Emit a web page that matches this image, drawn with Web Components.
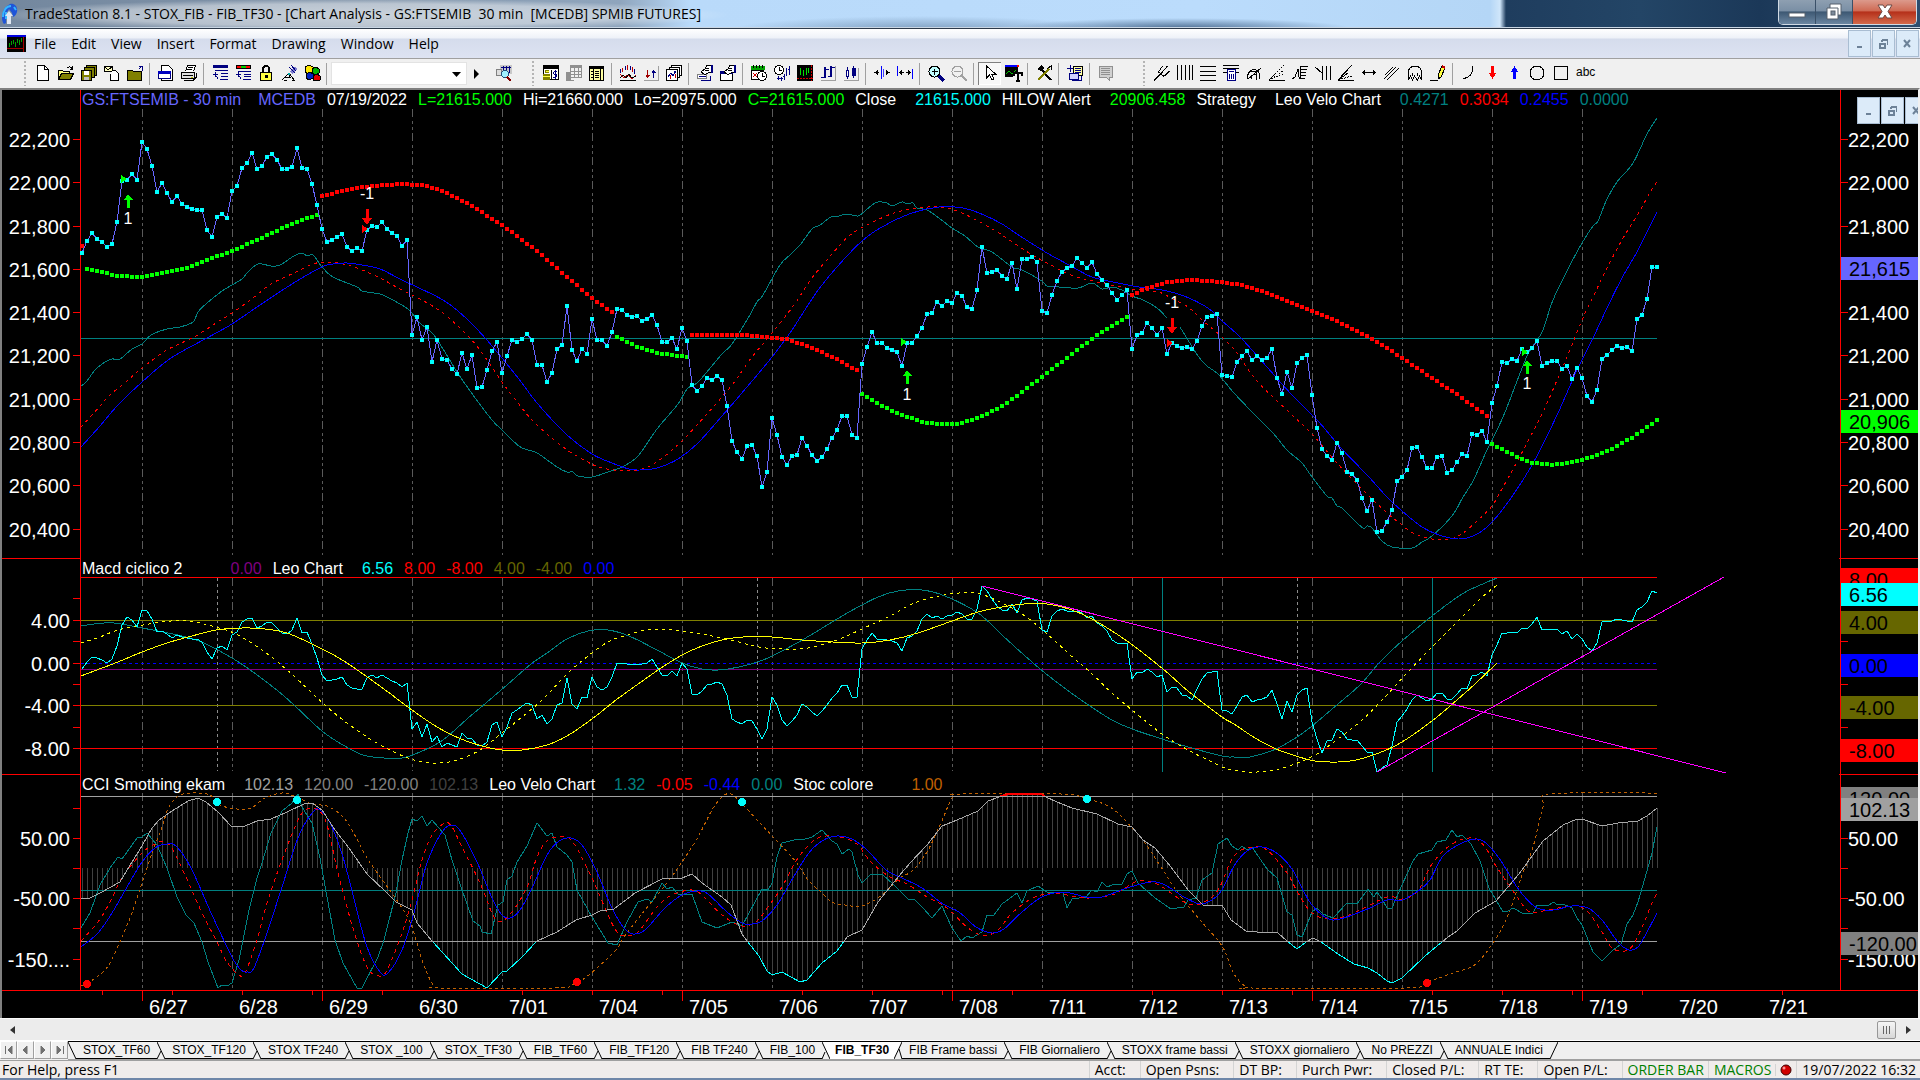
<!DOCTYPE html>
<html lang="en">
<head>
<meta charset="utf-8">
<title>TradeStation 8.1 - STOX_FIB - FIB_TF30</title>
<style>
  html, body { margin: 0; height: 100%; background: #f0f0f0; overflow: hidden; }
  body { font-family: "Open Sans", "Noto Sans", sans-serif; font-size: 14px; color: #000; }
</style>
</head>
<body>
<trade-station></trade-station>

<script>
// ---------- helpers ----------

// Every component shares this: attach an open root and fill it.
class BaseElement extends HTMLElement {
  connectedCallback() {
    this.attachShadow({ mode: 'open' }).innerHTML = `
      <style>
        *, *::before, *::after { box-sizing: border-box; }
        button { font: inherit; color: inherit; border: 0; padding: 0; background: none; }
        ${this.styles()}
      </style>
      ${this.markup()}`
  }
  styles() { return '' }
  markup() { return '' }
}

const BAR0 = 82      // x of the first bar
const STEP = 5       // bar spacing
const LAST = 315     // index of the last bar
const barX = (i) => BAR0 + i * STEP
const pairs = (text) => text.trim().split(/\s+/).map((p) => p.split(',').map(Number))
const list = (text) => text.trim().split(/\s+/).map(Number)

// linear interpolation along a list of [x, y] points
function valueAt(points, x) {
  for (let i = 1; i < points.length; i++) {
    const [x0, y0] = points[i - 1]
    const [x1, y1] = points[i]
    if (x <= x1) return y0 + (y1 - y0) * (x - x0) / (x1 - x0)
  }
  return points[points.length - 1][1]
}

// Smooth path through the points (Catmull-Rom as cubic beziers)
function smooth(points) {
  let d = `M${points[0]}`
  for (let i = 0; i < points.length - 1; i++) {
    const p0 = points[i - 1] || points[i]
    const p1 = points[i]
    const p2 = points[i + 1]
    const p3 = points[i + 2] || p2
    const c1 = [p1[0] + (p2[0] - p0[0]) / 6, p1[1] + (p2[1] - p0[1]) / 6]
    const c2 = [p2[0] - (p3[0] - p1[0]) / 6, p2[1] - (p3[1] - p1[1]) / 6]
    d += `C${c1.map((n) => n.toFixed(1))} ${c2.map((n) => n.toFixed(1))} ${p2}`
  }
  return d
}

const curve = (text, color, extra = '') =>
  `<path d="${smooth(pairs(text))}" stroke="${color}" ${extra}/>`
const zigzag = (points, color, extra = '') =>
  `<polyline points="${points.join(' ')}" stroke="${color}" ${extra}/>`
const hline = (y, color, extra = '') =>
  `<path d="M81 ${y}.5H${barX(LAST)}" stroke="${color}" ${extra}/>`
const square = (x, y, color) =>
  `<rect x="${x - 2}" y="${Math.round(y) - 2}" width="4" height="4" fill="${color}" stroke="none"/>`

function dotted(text, color) {
  const points = pairs(text)
  let out = ''
  for (let x = points[0][0]; x <= points[points.length - 1][0] + 1; x += STEP) {
    out += square(x, valueAt(points, x), color)
  }
  return out
}

// dash-dot session breaks, one every 18 bars
function sessions(top, bottom) {
  let out = ''
  for (let x = 142; x <= 1582; x += 90) {
    out += `<path d="M${x}.5 ${top}V${bottom}" stroke="#5a5a5a" stroke-dasharray="8 4 3 3 3 3"/>`
  }
  return out
}

// ---------- price panel ----------

// closes, in thirds of a pixel below y = 100
const CLOSES = list(`
460 423 398 416 426 441 432 366 242 240 221 240 126 147 198 276 249 279 306 288 312 321 327 330
330 390 411 351 342 354 272 258 203 189 159 207 198 171 162 180 207 207 201 144 204 207 252 315
387 426 420 411 402 441 453 444 453 390 378 381 366 387 399 408 438 420 705 651 720 681 786 721
777 780 807 822 759 807 765 864 861 810 753 726 819 768 720 726 717 702 720 795 795 846 819 747
735 618 750 783 747 762 657 720 720 738 696 627 630 645 651 648 663 657 645 675 726 726 714 746
684 722 855 873 857 833 839 828 840 918 1023 1056 1077 1038 1035 1068 1161 1116 954 1005 1071 1095 1068 1065
1014 1038 1065 1083 1071 1047 1014 990 948 948 1005 1014 792 741 696 729 729 744 750 756 798 729 729 708
684 642 639 606 618 603 609 579 588 621 627 570 441 519 516 510 528 537 489 567 477 477 471 486
633 639 585 543 516 504 498 474 489 504 486 522 540 555 579 600 585 570 747 705 699 669 684 705
684 762 729 738 744 741 747 723 678 651 648 642 825 828 831 786 768 753 780 768 780 774 747 833
882 816 864 789 774 765 884 984 1047 1068 1080 1029 1059 1116 1122 1140 1194 1233 1200 1296 1293 1266 1230 1143
1131 1110 1044 1041 1071 1104 1104 1071 1068 1119 1110 1086 1062 1068 1002 1005 993 1026 909 858 786 789 777 783
746 756 744 722 798 789 783 783 807 798 837 804 834 888 906 870 777 765 750 738 744 741 753 657
645 597 501 501`)

const arrowUp = (x, y) =>
  `<path d="M${x} ${y}l-4 6h3v8h3v-8h3z" fill="#00ff00" stroke="none"/>`
const arrowDown = (x, y) =>
  `<path d="M${x - 1} ${y}h3v9h3l-5 7l-5 -7h4z" fill="#ff0000" stroke="none"/>`
const entry = (x, y, color) =>
  `<path d="M${x - 2} ${y - 4}l6 4l-6 4z" fill="${color}" stroke="none"/>`
const tradeText = (x, y, text) =>
  `<text x="${x}" y="${y}" text-anchor="middle">${text}</text>`

function pricePlot() {
  const price = CLOSES.map((v, i) => [barX(i), Math.round(100 + v / 3)])
  return `
    ${sessions(109, 555)}
    ${hline(338, '#008080')}
    ${curve(`81,386 87,381 95,370 105,362 112,359 120,359 132,349 142,344 151,335 167,329 180,327 193,322
      198,312 207,303 222,291 232,285 242,279 247,273 258,264 271,266 280,265 294,256 302,253 307,256
      313,255 322,267 333,277 357,287 362,291 380,294 387,297 408,309 420,323 433,334 443,349 457,372
      473,395 492,420 502,430 512,440 522,448 537,453 557,467 567,472 573,472 578,476 592,477 608,472
      622,467 638,456 657,429 678,404 687,389 697,383 706,373 722,354 732,344 747,320 757,302 763,295
      780,265 790,255 800,245 812,229 820,225 831,217 839,216 847,214 858,216 865,211 872,205 878,202
      887,203 892,206 902,202 907,204 913,203 917,208 929,211 952,228 965,236 978,247 992,252 1012,267
      1022,270 1042,281 1047,286 1059,287 1078,288 1092,283 1102,289 1112,287 1122,290 1132,296 1143,300
      1157,308 1167,318`, '#008080')}
    ${curve(`1180,327 1188,340 1198,356 1207,366 1218,374 1234,393 1257,417 1273,433 1287,450 1302,463
      1312,477 1327,496 1332,498 1337,506 1342,508 1352,518 1363,528 1367,526 1372,528 1382,541 1392,547
      1412,548 1422,542 1432,536 1452,516 1463,497 1473,481 1487,450 1503,417 1519,376 1528,354 1537,340
      1543,330 1553,300 1567,271 1582,243 1593,226 1598,221 1607,199 1617,182 1633,163 1647,134
      1657,118`, '#008080')}
    ${curve(`81,427 100,406 110,395 127,381 142,368 167,350 194,337 216,323 232,313 253,298 271,284 294,273
      313,264 327,262 343,264 357,268 380,278 400,289 420,299 443,313 465,333 480,350 502,382 518,403
      535,423 563,447 584,460 602,468 629,471 645,468 661,459 682,441 706,415 732,385 752,357 772,333
      794,305 812,278 833,253 849,236 869,224 894,213 918,208 939,207 957,211 978,221 1002,235 1029,253
      1049,264 1071,275 1097,282 1132,289 1158,292 1171,298 1188,307 1202,320 1222,337 1237,353 1257,381
      1292,415 1312,434 1337,463 1363,490 1387,513 1402,525 1413,533 1432,539 1450,539 1463,533 1477,521
      1492,506 1503,487 1517,462 1527,443 1543,412 1558,378 1570,350 1582,320 1593,297 1606,270 1622,240
      1638,214 1652,189 1657,182`, '#ff0000', 'stroke-dasharray="3 4"')}
    ${curve(`81,447 100,426 118,405 142,382 171,358 207,338 232,324 257,307 292,284 322,267 333,264 347,263
      362,265 380,269 402,280 443,300 467,319 486,339 502,358 522,383 537,403 567,435 592,454 612,463
      629,469 640,470 657,468 678,459 698,443 722,416 747,387 772,357 792,330 816,293 837,267 862,241
      882,227 912,213 939,207 963,208 984,215 1002,224 1020,236 1047,253 1071,266 1092,277 1118,283
      1139,287 1162,290 1184,296 1208,308 1221,320 1241,338 1267,367 1292,395 1318,421 1342,449 1368,476
      1387,497 1402,511 1422,527 1439,535 1458,539 1473,536 1487,527 1503,509 1521,483 1537,456 1558,413
      1577,370 1593,338 1607,308 1622,278 1638,250 1657,212`, '#0000ff')}
    ${square(82, 246, '#ff0000')}
    ${dotted('87,269 102,272 117,276 142,277 163,273 184,269 207,260 232,251 257,240 287,226 307,218 318,215', '#00ff00')}
    ${dotted('322,196 343,191 362,187 384,185 402,184 422,185 443,191 467,203 502,225 537,251 567,277 592,298 612,312', '#ff0000')}
    ${dotted('617,337 638,347 657,353 678,356 687,357', '#00ff00')}
    ${dotted('692,335 743,335 767,337 787,339 812,348 837,359 858,371', '#ff0000')}
    ${dotted('862,394 877,403 897,413 922,422 937,424 957,424 978,418 1002,406 1022,392 1047,373 1072,354 1097,335 1127,317', '#00ff00')}
    ${dotted(`1132,295 1147,288 1167,282 1188,280 1212,281 1242,285 1267,293 1287,301 1312,311 1337,321 1357,331
      1372,339 1387,348 1402,358 1432,378 1458,395 1487,416`, '#ff0000')}
    ${dotted('1492,444 1513,455 1532,463 1553,465 1572,462 1593,457 1612,449 1633,437 1647,427 1657,420', '#00ff00')}
    ${zigzag(price, '#6666ff')}
    ${price.map(([x, y]) => square(x, y, '#00ffff')).join('')}
    ${entry(123, 179, '#00ff00')}${arrowUp(128, 194)}${tradeText(128, 224, '1')}
    ${entry(364, 229, '#ff0000')}${arrowDown(367, 209)}${tradeText(367, 199, '-1')}
    ${entry(903, 342, '#00ff00')}${arrowUp(907, 370)}${tradeText(907, 400, '1')}
    ${entry(1169, 343, '#ff0000')}${arrowDown(1172, 318)}${tradeText(1172, 308, '-1')}
    ${entry(1524, 352, '#00ff00')}${arrowUp(1527, 360)}${tradeText(1527, 389, '1')}`
}

// ---------- macd panel ----------

// oscillator, in thirds of a pixel below y = 550
const MACD = list(`
356 336 320 325 330 340 328 289 226 200 210 230 180 184 208 247 242 252 264 254 262 265 266 267
276 306 328 293 289 300 255 246 216 208 205 234 228 217 220 234 248 252 240 203 248 247 282 325
375 394 391 386 382 405 414 416 418 385 376 385 374 383 392 400 410 400 538 516 562 523 577 557
591 580 585 590 550 564 568 586 588 576 525 516 560 532 490 481 468 460 466 508 496 521 508 466
458 384 463 478 442 445 382 410 420 410 382 340 338 342 341 343 341 338 328 350 376 379 362 379
340 358 432 436 422 405 403 395 402 436 506 516 523 509 513 538 568 538 440 466 510 528 512 494
461 472 485 497 484 466 445 428 404 404 441 441 297 270 250 268 268 270 274 280 303 264 259 243
208 192 205 198 208 197 196 187 192 207 208 177 108 122 148 168 180 183 162 189 149 145 147 152
240 245 198 184 178 183 185 182 190 203 198 218 229 243 270 279 279 279 386 367 368 357 366 380
376 427 411 414 435 437 450 418 388 370 366 363 481 483 492 467 440 436 457 450 448 442 421 462
507 454 487 434 421 414 517 566 609 572 570 538 546 568 570 571 588 607 607 666 655 645 588 517
499 477 449 436 444 454 448 430 428 447 447 432 413 418 378 375 365 377 316 284 250 250 247 250
235 238 221 201 241 238 238 237 253 244 268 252 266 292 304 279 217 213 212 206 211 213 215 181
172 156 124 128`)

function macdPlot() {
  const line = MACD.map((v, i) => [barX(i), Math.round(550 + v / 3)])
  const cycleMarks = [217, 757, 1297]
    .map((x) => `<path d="M${x}.5 578V771" stroke="#8c8c8c" stroke-dasharray="3 3"/>`).join('')
  return `
    ${sessions(578, 771)}
    ${cycleMarks}
    ${hline(577, '#ff0000')}
    ${hline(620, '#808000')}
    ${hline(663, '#0000ff', 'stroke-dasharray="3 3"')}
    ${hline(669, '#800080')}
    ${hline(705, '#808000')}
    ${hline(748, '#ff0000')}
    <path d="M1162.5 578V772M1432.5 578V772" stroke="#008080"/>
    ${curve(`81,626 94,624 114,623 142,628 163,632 186,637 204,643 232,658 253,672 278,691 294,705 322,731
      343,745 363,755 384,758 402,758 420,752 443,740 467,719 486,703 507,685 531,664 547,653 567,639
      588,631 608,630 629,636 657,650 682,663 702,669 718,670 739,667 763,660 784,650 804,639 829,624
      849,612 878,597 898,591 922,590 945,596 978,613 1002,635 1024,655 1045,673 1067,690 1090,706
      1112,720 1132,729 1162,739 1188,747 1222,756 1234,757 1250,757 1276,749 1297,737 1312,726 1338,704
      1361,684 1379,663 1402,641 1432,616 1462,594 1485,583 1497,578`, '#008080')}
    ${curve(`81,643 100,637 118,630 143,625 171,621 188,621 204,624 229,631 245,639 265,652 286,669 310,691
      327,707 347,723 367,737 388,749 408,758 424,762 439,763 457,760 480,750 502,733 527,713 543,699
      567,674 588,656 608,642 624,636 641,631 661,629 682,631 702,634 731,640 759,647 784,649 808,648
      837,640 862,629 890,616 914,603 939,596 959,593 980,594 1002,603 1022,614 1045,632 1069,654
      1090,672 1112,693 1132,710 1162,734 1188,750 1208,760 1222,767 1233,770 1246,772 1269,771 1292,765
      1315,755 1338,739 1361,721 1384,698 1407,673 1432,647 1457,622 1480,599 1497,585`, '#ffff00', 'stroke-dasharray="3 4"')}
    ${zigzag(line, '#00ffff')}
    ${curve(`81,676 102,668 118,662 142,652 167,643 192,636 216,630 242,628 265,629 287,633 312,644 339,658
      363,674 388,692 412,710 437,727 461,739 486,747 502,750 522,750 547,745 567,736 592,719 616,700
      641,682 661,668 682,655 702,646 722,640 743,637 772,637 802,640 833,642 862,643 890,640 918,633
      952,621 978,612 1002,607 1024,604 1047,604 1069,609 1092,619 1127,641 1163,669 1188,691 1222,717
      1234,724 1255,738 1276,749 1296,756 1315,761 1338,762 1356,760 1379,753 1402,742 1432,721 1457,700
      1475,684 1497,663`, '#ffff00')}
    <path d="M982 586L1726 773M1377 772L1724 577" stroke="#ff00ff"/>`
}

// ---------- cci panel ----------

const CCI = pairs(`
81,898 90,898 102,892 120,882 127,870 142,846 152,828 159,820 172,811 188,801 198,798 206,802 218,812
232,827 245,826 257,821 271,819 287,812 306,803 312,803 322,810 335,830 349,848 367,874 386,892 396,902
412,910 417,923 432,941 443,953 462,974 487,988 502,972 507,971 522,957 537,941 557,932 576,920 592,915
600,911 614,909 635,893 662,879 682,878 692,874 702,883 722,897 731,905 742,934 747,941 759,956 767,971
772,975 782,972 800,982 807,980 822,963 837,951 847,937 862,930 878,902 894,882 910,863 927,845 942,826
957,820 978,811 988,801 1002,796 1008,794 1041,794 1046,797 1057,802 1072,808 1097,814 1118,824 1132,827
1143,840 1155,848 1171,867 1188,890 1204,906 1222,905 1231,920 1246,931 1257,932 1278,933 1287,941
1297,949 1306,942 1313,938 1321,942 1338,954 1354,964 1368,968 1377,973 1387,981 1392,983 1402,978
1425,956 1448,937 1457,931 1475,913 1496,901 1519,874 1543,841 1563,825 1577,819 1582,819 1602,826
1618,823 1638,821 1647,816 1657,808`)

const signal = (x, y, color) => `<ellipse cx="${x}" cy="${y}" rx="4" ry="4" fill="${color}" stroke="none"/>`

function cciPlot() {
  let histogram = ''
  for (let i = 0; i <= LAST; i++) {
    histogram += `M${barX(i)}.5 868V${Math.round(valueAt(CCI, barX(i)))}`
  }
  return `
    <clipPath id="low"><rect x="81" y="942" width="1600" height="50"/></clipPath>
    <clipPath id="high"><rect x="81" y="780" width="1600" height="16"/></clipPath>
    ${sessions(793, 988)}
    <path d="${histogram}" stroke="#404040"/>
    ${hline(796, '#a0a0a0')}
    ${hline(890, '#008080')}
    ${hline(941, '#a0a0a0')}
    ${curve(`81,986 94,979 108,966 122,937 133,910 142,883 152,853 162,827 169,807 180,795 196,793 210,795
      220,805 237,809 251,808 265,798 282,793 294,796 312,804 327,806 341,815 351,828 367,858 386,885
      402,908 412,927 422,960 432,983 441,988 555,988 571,985 582,980 596,969 616,950 624,937 645,910
      667,883 682,862 698,837 712,810 722,797 731,794 743,805 759,822 776,840 796,862 808,880 822,893
      832,902 845,905 862,906 882,895 900,878 912,871 927,852 941,823 952,798 961,794 1061,794 1087,799
      1104,804 1118,813 1132,828 1143,840 1161,867 1178,893 1200,920 1222,946 1234,974 1246,987 1252,988
      1407,988 1430,981 1453,973 1473,966 1485,954 1501,930 1512,905 1521,878 1533,847 1543,807 1551,794
      1657,793`, '#c06000', 'stroke-dasharray="3 3"')}
    ${zigzag(pairs(`81,928 90,913 100,885 110,868 118,857 122,859 137,838 142,837 147,833 157,845 167,868
      177,897 186,915 194,923 202,942 208,962 218,988 222,985 227,986 232,983 239,960 249,910 257,878
      262,863 271,833 282,811 292,803 298,794 302,807 312,823 320,858 327,897 335,940 343,963 357,988
      362,988 378,957 384,940 396,893 402,860 408,833 412,819 417,821 422,816 427,826 432,820 445,835
      452,860 461,887 473,921 480,926 482,932 491,934 498,905 503,902 507,880 512,876 517,862 527,846
      537,823 547,836 552,833 557,847 567,855 572,862 577,890 592,917 608,943 617,945 627,922 638,902
      647,899 652,902 662,883 667,889 672,887 678,894 692,894 702,922 717,928 732,922 742,926 762,889
      768,890 772,883 777,857 782,843 798,839 802,840 812,837 822,830 832,841 837,844 842,854 849,849
      852,852 858,875 862,883 871,874 882,874 894,885 908,899 914,899 922,907 932,918 942,906 952,928
      961,941 967,936 972,938 982,932 987,915 994,915 1002,904 1017,893 1022,903 1027,891 1038,886
      1047,892 1063,893 1067,908 1072,899 1086,897 1092,890 1097,892 1102,882 1107,887 1112,885 1122,884
      1127,874 1132,871 1138,883 1155,898 1171,909 1184,907 1188,900 1196,898 1202,880 1212,873 1218,844
      1227,838 1232,846 1238,850 1242,846 1247,850 1252,847 1267,869 1277,878 1287,912 1292,915 1297,935
      1302,937 1312,912 1317,908 1323,914 1333,918 1347,903 1357,904 1368,889 1374,897 1377,892 1382,899
      1387,908 1392,908 1402,885 1413,861 1418,854 1432,850 1437,842 1446,840 1452,830 1457,837 1462,835
      1471,844 1480,861 1489,888 1503,912 1508,911 1513,908 1524,914 1533,913 1537,905 1548,906 1553,902
      1558,905 1563,904 1572,908 1577,918 1582,925 1593,952 1602,961 1612,951 1621,944 1627,924 1633,915
      1638,902 1643,885 1652,853 1657,827`), '#008080')}
    ${curve(`81,941 98,922 110,902 122,878 142,853 157,843 163,842 171,847 186,877 202,913 216,940 227,962
      239,975 245,973 257,940 267,903 282,860 298,820 307,809 318,810 327,825 339,877 355,935 367,967
      376,975 386,972 402,933 412,900 422,860 432,835 445,823 452,827 462,847 480,883 492,913 500,922
      512,912 527,887 537,857 547,841 559,837 572,841 592,878 608,915 617,932 624,936 638,932 657,907
      672,895 692,890 704,897 722,915 742,926 757,921 768,907 782,887 798,858 816,839 832,836 847,839
      858,845 871,862 890,877 907,884 927,897 947,908 967,927 982,935 997,931 1012,913 1033,898 1053,893
      1072,896 1090,898 1112,895 1122,890 1138,881 1155,883 1171,893 1188,904 1202,903 1218,890 1234,856
      1252,847 1267,850 1287,873 1297,891 1312,913 1333,919 1356,912 1387,897 1402,899 1418,891 1432,864
      1452,844 1473,838 1485,847 1496,866 1513,891 1527,910 1537,912 1558,908 1577,906 1588,912 1602,932
      1612,948 1625,951 1633,945 1643,925 1652,903 1657,893`, '#ff0000', 'stroke-dasharray="4 4"')}
    ${curve(`81,947 98,933 112,913 127,887 142,862 155,848 167,844 177,847 192,870 212,915 232,957 241,970
      247,972 254,968 267,933 282,887 298,838 312,813 320,810 331,825 343,857 355,903 367,947 380,972
      388,973 402,950 414,913 427,863 442,832 452,825 461,832 477,862 492,898 502,915 510,918 520,910
      532,888 547,855 559,841 571,838 582,845 596,870 612,908 624,928 633,934 645,930 665,908 682,895
      697,891 708,894 727,912 742,923 752,924 762,921 777,905 790,883 808,854 822,841 837,836 852,839
      867,850 886,870 902,878 922,888 943,904 959,912 976,927 992,933 1004,929 1022,912 1042,897
      1063,892 1086,897 1102,897 1127,888 1151,882 1165,885 1184,897 1200,904 1212,900 1222,890 1234,866
      1247,851 1262,847 1278,854 1292,869 1302,888 1312,905 1327,918 1340,919 1370,908 1387,900 1402,900
      1418,891 1430,880 1443,856 1462,843 1477,839 1487,844 1501,861 1519,890 1537,908 1553,910 1572,906
      1588,908 1602,920 1618,942 1629,950 1638,947 1647,932 1657,913`, '#0000ff')}
    ${zigzag(CCI, '#a8a8a8')}
    ${zigzag(CCI, '#00ffff', 'clip-path="url(#low)"')}
    ${zigzag(CCI, '#ff0000', 'stroke-width="2" clip-path="url(#high)"')}
    ${signal(217, 802, '#00ffff')}${signal(297, 800, '#00ffff')}${signal(742, 802, '#00ffff')}${signal(1087, 799, '#00ffff')}
    ${signal(87, 984, '#ff0000')}${signal(577, 982, '#ff0000')}${signal(1427, 983, '#ff0000')}`
}

const PANELS = {
  price: {
    top: 90, height: 468, legendHeight: 20, plot: pricePlot,
    legend: [
      ['GS:FTSEMIB - 30 min', '#6666ff'], ['MCEDB', '#6666ff', 6], ['07/19/2022', '#fff'],
      ['L=21615.000', '#00ff00'], ['Hi=21660.000', '#fff'], ['Lo=20975.000', '#fff'],
      ['C=21615.000', '#00ff00'], ['Close', '#fff'], ['21615.000', '#00ffff', 8],
      ['HILOW Alert', '#fff'], ['20906.458', '#00ff00', 8], ['Strategy', '#fff'],
      ['Leo Velo Chart', '#fff', 8], ['0.4271', '#008080', 8], ['0.3034', '#ff0000'],
      ['0.2455', '#0000ff'], ['0.0000', '#008080'],
    ],
    labels: [[139, '22,200'], [182, '22,000'], [226, '21,800'], [269, '21,600'], [312, '21,400'],
      [355, '21,200'], [399, '21,000'], [442, '20,800'], [485, '20,600'], [529, '20,400']],
    ticks: [],
    tags: [[257, '21,615', '#6666ff'], [410, '20,906', '#00ff00']],
  },
  macd: {
    top: 559, height: 215, legendHeight: 18, plot: macdPlot,
    legend: [
      ['Macd ciclico 2', '#fff'], ['0.00', '#800080', 37], ['Leo Chart', '#fff'],
      ['6.56', '#00ffff', 8], ['8.00', '#ff0000'], ['-8.00', '#ff0000'], ['4.00', '#666600'],
      ['-4.00', '#666600'], ['0.00', '#0000ff'],
    ],
    labels: [[620, '4.00', 'left'], [663, '0.00', 'left'], [705, '-4.00', 'left'], [748, '-8.00', 'left']],
    ticks: [598, 641, 684, 727],
    tags: [[568, '8.00', '#ff0000'], [583, '6.56', '#00ffff'], [611, '4.00', '#666600'],
      [654, '0.00', '#0000ff'], [696, '-4.00', '#666600'], [739, '-8.00', '#ff0000']],
  },
  cci: {
    top: 775, height: 215, legendHeight: 18, plot: cciPlot,
    legend: [
      ['CCI Smothing ekam', '#fff'], ['102.13', '#a0a0a0', 8], ['120.00', '#808080'],
      ['-120.00', '#808080'], ['102.13', '#404040'], ['Leo Velo Chart', '#fff'],
      ['1.32', '#008080', 8], ['-0.05', '#ff0000'], ['-0.44', '#0000ff'], ['0.00', '#008080'],
      ['Stoc colore', '#fff'], ['1.00', '#c06000', 27],
    ],
    labels: [[838, '50.00'], [898, '-50.00'], [959, '-150....', 'left'], [959, '-150.00', 'right']],
    ticks: [808, 868, 928],
    tags: [[787, '120.00', '#808080'], [798, '102.13', '#a0a0a0'], [932, '-120.00', '#808080']],
  },
}

// <value-axis side panel> — scale beside a plot, with coloured last-value tags on the right
class ValueAxis extends BaseElement {
  styles() {
    return `
      :host { display: block; }
      svg { display: block; width: 100%; height: 100%; font: 20px "Liberation Sans", Arial, sans-serif; fill: #fff; }
      path { stroke: #ff0000; fill: none; shape-rendering: crispEdges; }`
  }
  markup() {
    const side = this.getAttribute('side')
    const panel = PANELS[this.getAttribute('panel')]
    const y = (v) => v - panel.top
    const left = side === 'left'
    const labels = panel.labels.filter((l) => !l[2] || l[2] === side)
    const ticks = labels.map((l) => l[0]).concat(panel.ticks)
    return `<svg>
      <path d="M${left ? 78 : 0}.5 0V${panel.height}"/>
      ${ticks.map((t) => `<path d="${left ? 'M71' : 'M1'} ${y(t)}.5h7"/>`).join('')}
      ${labels.map(([v, text]) => left
        ? `<text x="68" y="${y(v) + 8}" text-anchor="end">${text}</text>`
        : `<text x="8" y="${y(v) + 8}">${text}</text>`).join('')}
      ${left ? '' : panel.tags.map(([v, text, color]) => `
        <rect x="1" y="${y(v)}" width="100" height="23" fill="${color}"/>
        <text x="9" y="${y(v) + 19}" fill="#000">${text}</text>`).join('')}
    </svg>`
  }
}
customElements.define('value-axis', ValueAxis)

// <chart-panel name> — left axis, legend over plot, right axis
class ChartPanel extends BaseElement {
  styles() {
    return `
      :host { display: grid; grid-template-columns: 79px minmax(0, 1fr) 78px; }
      .plot { display: flex; flex-direction: column; min-width: 0; }
      .legend {
        display: flex; align-items: flex-start; gap: 11px; padding-left: 1px; white-space: nowrap;
        font: 16px/20px "Liberation Sans", Arial, sans-serif;
      }
      svg { display: block; width: 100%; flex: 1; min-height: 0; fill: none; overflow: visible; }
      svg g { shape-rendering: crispEdges; }
      text { fill: #fff; font: 16px "Liberation Sans", Arial, sans-serif; }`
  }
  markup() {
    const name = this.getAttribute('name')
    const panel = PANELS[name]
    this.style.height = `${panel.height}px`
    const items = panel.legend.map(([text, color, before = 0]) =>
      `<span style="color:${color};margin-left:${before}px">${text}</span>`).join('')
    return `
      <value-axis side="left" panel="${name}"></value-axis>
      <div class="plot">
        <div class="legend" style="height:${panel.legendHeight}px">${items}</div>
        <svg><g transform="translate(-81 ${-(panel.top + panel.legendHeight)})">${panel.plot()}</g></svg>
      </div>
      <value-axis side="right" panel="${name}"></value-axis>`
  }
}
customElements.define('chart-panel', ChartPanel)

class DateAxis extends BaseElement {
  styles() {
    return `
      :host { display: block; height: 27px; position: relative; border-top: 1px solid #ff0000; overflow: hidden; }
      svg { position: absolute; inset: 0; width: 100%; height: 12px; stroke: #ff0000; shape-rendering: crispEdges; }
      .days {
        display: grid; grid-auto-flow: column; grid-auto-columns: 90px; padding: 4px 0 0 147px;
        font: 20px/24px "Liberation Sans", Arial, sans-serif; color: #fff;
      }`
  }
  markup() {
    const days = ['6/27', '6/28', '6/29', '6/30', '7/01', '7/04', '7/05', '7/06', '7/07', '7/08',
      '7/11', '7/12', '7/13', '7/14', '7/15', '7/18', '7/19', '7/20', '7/21']
    const short = [102, 172, 242, 312, 382, 522, 592, 662, 802, 872, 942, 1012, 1152, 1222, 1292, 1432, 1502, 1572, 1642, 1782]
    const long = [142, 322, 682, 952, 1312, 1582]
    return `
      <svg>
        ${short.map((x) => `<path d="M${x - 2}.5 0v4"/>`).join('')}
        ${long.map((x) => `<path d="M${x - 2}.5 0v10"/>`).join('')}
      </svg>
      <div class="days">${days.map((d) => `<span>${d}</span>`).join('')}</div>`
  }
}
customElements.define('date-axis', DateAxis)

// <mdi-buttons> — minimize / restore / close of a child window
class MdiButtons extends BaseElement {
  styles() {
    return `
      :host { display: flex; gap: 1px; }
      button { width: 23px; height: 27px; background: #dcebf9; border: 1px solid #a9bdd2; display: grid; place-items: center; }
      svg { width: 9px; height: 11px; stroke: #6d8298; fill: none; stroke-width: 2; shape-rendering: crispEdges; }`
  }
  markup() {
    return `
      <button aria-label="Minimize"><svg><path d="M2 9h5"/></svg></button>
      <button aria-label="Restore"><svg><path d="M3 2h6v5M3 2v2M1 6h5v4H1z" stroke-width="1.500"/></svg></button>
      <button aria-label="Close"><svg style="shape-rendering:auto"><path d="M1 2l6 7M7 2l-6 7"/></svg></button>`
  }
}
customElements.define('mdi-buttons', MdiButtons)

class ChartWindow extends BaseElement {
  styles() {
    return `
      :host {
        display: block; position: relative; background: #000; overflow: hidden;
        border: 2px solid #808080; border-right-color: #f0f0f0; border-bottom: 0;
      }
      .split { display: flex; justify-content: space-between; height: 1px; }
      .split::before, .split::after { content: ""; width: 79px; background: #ff0000; }
      mdi-buttons { position: absolute; top: 7px; left: calc(100% - 61px); }`
  }
  markup() {
    return `
      <chart-panel name="price"></chart-panel>
      <div class="split"></div>
      <chart-panel name="macd"></chart-panel>
      <div class="split"></div>
      <chart-panel name="cci"></chart-panel>
      <date-axis></date-axis>
      <mdi-buttons></mdi-buttons>`
  }
}
customElements.define('chart-window', ChartWindow)

// ---------- title and menu ----------

class TitleBar extends BaseElement {
  styles() {
    return `
      :host {
        display: flex; align-items: center; height: 29px; border-bottom: 1px solid #2d3a4a;
        box-shadow: inset 0 -1px #c9d6e4;
        background:
          radial-gradient(ellipse 370px 16px at 360px 15px, #ffffff90 0, #ffffff70 70%, #ffffff00 100%),
          radial-gradient(ellipse 190px 14px at 920px 30px, #4d6b8c90 0, #4d6b8c00 100%),
          radial-gradient(ellipse 170px 10px at 1180px 28px, #35557acc 0, #35557a00 100%),
          linear-gradient(90deg, #73879e 0, #8699ae 400px, #8fa5bd 620px, #b9dafa 690px, #bbdcfc 1200px, #b4d6f6 1490px, #d0e6fa 1500px, #1f3d5e 1506px, #234566 1640px, #1b3858 1760px, #2d4d6e 100%);
      }
      .logo { width: 17px; height: 22px; margin: 0 7px 0 1px; }
      h1 { flex: 1; margin: 0; font-size: 14px; font-weight: 400; line-height: 28px; white-space: pre; }
      .controls {
        display: flex; align-self: flex-start; height: 25px; margin-right: 3px; border: 1px solid #d0dae4;
        border-top: 0; border-radius: 0 0 5px 5px; overflow: hidden;
      }
      .controls button { width: 37px; display: grid; place-items: center; border-right: 1px solid #3a5068;
        background: linear-gradient(#8e9fb1, #7a8fa5 45%, #3d5873 50%, #6b86a1); }
      .controls .close { width: 63px; border: 0; background: linear-gradient(#dc9a8c, #cf6a54 45%, #b5301a 50%, #d4694a); }
      .controls svg { width: 20px; height: 18px; }`
  }
  markup() {
    return `
      <svg class="logo" viewBox="0 0 17 22">
        <path d="M9 1C13 0 17 3 16 9C15 12 14 13 12 14L11 10L8 6L5 11V20L3 21C-1 16 1 5 9 1Z" fill="#1f55d8"/>
        <path d="M2 14C2 8 5 3 10 3M5 16V9M13 4l2 3" stroke="#36b6ff" stroke-width="2" fill="none"/>
        <path d="M8 8l4 5h-2v8h-4v-8h-2z" fill="#dfe7f2"/>
      </svg>
      <h1>TradeStation 8.1 - STOX_FIB - FIB_TF30 - [Chart Analysis - GS:FTSEMIB  30 min  [MCEDB] SPMIB FUTURES]</h1>
      <div class="controls">
        <button aria-label="Minimize"><svg><rect x="2" y="10" width="16" height="4" fill="#fff" stroke="#56606c"/></svg></button>
        <button aria-label="Restore"><svg fill="none" stroke="#56606c"><path d="M6 1h11v11h-3v4h-11v-11h3z" fill="#fff"/><path d="M6 5h8v7"/><rect x="7" y="8" width="4" height="4" fill="#7d8b9b"/></svg></button>
        <button class="close" aria-label="Close"><svg><path d="M3 2h5l2 3l2-3h5l-4 6.500l4 6.500h-5l-2-3l-2 3h-5l4-6.500z" fill="#fff" stroke="#6d4a45"/></svg></button>
      </div>`
  }
}
customElements.define('title-bar', TitleBar)

class MenuBar extends BaseElement {
  styles() {
    return `
      :host {
        display: flex; align-items: center; height: 29px; padding-right: 1px;
        background: linear-gradient(#ffffff 0, #eef1f8 9px, #d5dcec 10px, #dde3f2 100%);
      }
      .mark { width: 19px; height: 17px; margin: 0 8px 0 7px; }
      nav { display: flex; gap: 15px; flex: 1; }
      nav button { line-height: 27px; }`
  }
  markup() {
    const items = ['File', 'Edit', 'View', 'Insert', 'Format', 'Drawing', 'Window', 'Help']
    return `
      <svg class="mark" viewBox="0 0 19 17" shape-rendering="crispEdges">
        <rect width="19" height="17" fill="#000"/><rect width="19" height="2" fill="#0000e0"/>
        <path d="M2 12V8M4 10V6M6 9V5M8 12V7M10 8V4M12 10V5M14 7V3" stroke="#00a000"/>
        <path d="M0 13.500H17M16.500 2V17" stroke="#a00000"/>
      </svg>
      <nav>${items.map((t) => `<button>${t}</button>`).join('')}</nav>
      <mdi-buttons></mdi-buttons>`
  }
}
customElements.define('menu-bar', MenuBar)

// ---------- toolbar ----------

// 16x16 glyphs; K = black, N = navy line work
const K = (d) => `<path d="${d}" stroke="#000"/>`
const N = (d) => `<path d="${d}" stroke="#000080"/>`
const box = (x, y, w, h, fill, stroke = '#000') =>
  `<rect x="${x}.5" y="${y}.5" width="${w}" height="${h}" fill="${fill}" stroke="${stroke}"/>`
const HAND = '<path d="M5.500 8.500l-1-2l4-3l1-3h5l1 1v6h-4l-3 2z" fill="#fff" stroke="#000"/><path d="M14 0h2v8h-2z" fill="#000080"/>' + K('M9 3.500h3M8 5.500h4')

const ICONS = {
  new: '<path d="M2.500 .5h7l4 4v11h-11z" fill="#fff" stroke="#000"/>' + K('M9.500 .5v4h4'),
  open: '<path d="M.5 14.500v-9h4l1 1h6v2" fill="#ffff80" stroke="#000"/><path d="M.5 14.500l3-6h12l-3 6z" fill="#808000" stroke="#000"/>' + K('M9 3c2-2 4-1 5 1M14.500 1v3.500h-3'),
  saveAll: box(5, 0, 10, 10, '#808000') + box(3, 2, 10, 10, '#808000') + box(0, 5, 10, 10, '#808000') + '<path d="M3 6h5v4H3z" fill="#fff"/><path d="M3 12h5v3H3z" fill="#c0c0c0"/>',
  attach: box(0, 1, 8, 5, '#ffffc0') + K('M1 2l3 3l4-3') + '<path d="M8.500 5.500h3l3 3v7h-8v-7" fill="#fff" stroke="#000"/>',
  folder: '<path d="M.5 15.500v-10h5l1 1h8v9z" fill="#808000" stroke="#000"/>' + N('M15 6V1.500M12 1.500h3.500M12 4l3-3'),
  window: '<path d="M3.500 .5h7l4 4v11h-11z" fill="#fff" stroke="#000"/>' + box(0, 6, 12, 7, '#fff', '#000080') + '<path d="M0 6h13v3H0z" fill="#0000c0"/>',
  print: '<path d="M4.500 6.500l2-6h8l-2 6" fill="#fff" stroke="#000"/>' + box(0, 7, 13, 6, '#e0e0e0') + K('M7 2.500h5M6 4.500h5M2 10.500h10M3 15.500h9l3-3v-5') + '<path d="M10 12h2v1h-2z" fill="#c0c000"/>',
  back: '<path d="M1 0h15v3H1z" fill="#000080"/>' + N('M3 5.500h13M9 8.500h7M9 11.500h7M8 14.500h8M6 9.500H1M1 9.500c3 0 4 2 5 4M3.500 7v5'),
  backColor: '<path d="M1 0h15v4H1z" fill="#000"/><path d="M2 1h4v2H2z" fill="#f00"/><path d="M6 1h5v2H6z" fill="#0c0"/><path d="M11 1h4v2h-4z" fill="#f00"/>' + N('M3 6.500h13M9 9.500h7M9 11.500h7M8 14.500h8M6 9.500H1M1 9.500c3 0 4 2 5 4M3.500 7v5'),
  lock: '<path d="M5 8V4c0-4 6-4 6 0v4" stroke="#000" stroke-width="2"/>' + box(2, 7, 11, 8, '#ffff40') + '<path d="M7 10h3v3H7z" fill="#000"/>',
  satellite: '<path d="M9 7l5-6l2 3l-5 5z" fill="#8080d0"/>' + N('M8 2l6 6M10 0l5 6') + K('M1 15l7-7l5 7M4 12h6M3 15h3M11 15h3M8 8v4') + '<circle cx="8" cy="9" r="1.500" fill="#0aa"/>',
  cubes: '<path d="M1 2l4-2l4 2v5l-4 2l-4-2z" fill="#ffe800" stroke="#000"/><path d="M8 4l4-2l3 2v4l-4 2l-3-2z" fill="#00b000" stroke="#000"/><path d="M2 9l4-2l3 2v4l-4 2l-3-2z" fill="#0020c0" stroke="#000"/><path d="M9 11l4-2l3 2v4l-3 1l-4-1z" fill="#e00000" stroke="#000"/>',
  lookup: '<path d="M4 0h12v9H4z" fill="#c8c8c8"/>' + N('M5 2.500h10M7 1v7M10 1v7M13 1v7') + box(0, 4, 5, 6, '#ddd', '#808080') + '<circle cx="9" cy="9" r="3.500" fill="#a0f0ff" stroke="#205080"/><path d="M11 12l4 4" stroke="#800000" stroke-width="2"/>',
  account: box(0, 0, 15, 14, '#fff') + '<path d="M1 1h14v3H1z" fill="#000"/><path d="M2 5h4v3H2zM0 9h7v6H0z" fill="#808000"/><path d="M0 11.500h7M3 6.500h3" stroke="#ffff40"/>' + N('M14 6.500h-3M10.500 7v2M11 9.500h3M13.500 10v2M10 12.500h3M12.500 5v9') + K('M8.500 5v9'),
  accountOff: '<path d="M4 0h12v3H4zM0 7h5v8H0z" fill="#909090"/><path d="M4.500 3v12M8.500 3v10M12.500 3v10M15.500 3v10M4 6.500h12M4 9.500h12M4 12.500h12M0 15.500h8" stroke="#909090"/>',
  sheet: box(0, 1, 14, 14, '#ffffa0') + '<path d="M1 1h14v3H1z" fill="#000"/>' + K('M4.500 4v11M11.500 4v11M2 6.500h2M2 9.500h2M2 12.500h2M6 6.500h4M6 8.500h4M6 10.500h4M6 12.500h4'),
  study: '<path d="M2.500 3v4M7.500 0v5M12.500 2v5" stroke="#c00000"/>' + N('M.5 4v4M5.500 1v4M10.500 1v4M14.500 4v5') + '<path d="M0 9l4 4l4-3l4 4l4-4" stroke="#c00000"/>' + K('M0 13l3-3l3 3l3-4l3 4l4-2M0 15.500h16'),
  sort: '<path d="M4.500 5v8M2.500 10.500h4M3 11.500h3" stroke="#a00000"/><path d="M10.500 13V5M8.500 7.500h4M9 6.500h3" stroke="#000080"/><path d="M1 15.500h14.500V1" stroke="#a0a0a0"/>',
  charts: box(5, 0, 10, 10, '#fff') + box(3, 2, 10, 10, '#fff') + box(0, 4, 11, 11, '#fff') + N('M2 12l3-4l2 3l3-5M8 6.500h2') + '<path d="M4.500 10v4M9.500 9v4" stroke="#c00000"/>',
  hand: box(0, 9, 9, 4, '#fff', '#808080') + HAND + N('M4 15.500h10M13.500 15v-4M2 11.500h7'),
  handWindow: box(0, 6, 12, 9, '#fff') + '<path d="M0 6h13v3H0z" fill="#000080"/>' + HAND,
  calendar: box(0, 2, 12, 12, '#fff') + '<path d="M0 1h14v4H0z" fill="#00a000"/>' + K('M2.500 0v3M5.500 0v3M8.500 0v3M11.500 0v3M0 5.500h12') + '<path d="M2 8l4 4M6 8l-4 4" stroke="#d00000"/><circle cx="11" cy="11" r="4.500" fill="#fff" stroke="#000"/>' + K('M11.500 8v3.500h2'),
  clock: '<circle cx="5" cy="5" r="4.500" fill="#fff" stroke="#000"/>' + K('M5.500 2v3.500h2') + N('M12.500 3v8M15.500 1v9M4.500 11v4M7.500 12v4M10.500 9v6M14 4.500h2M3 13.500h6M9 11.500h2'),
  bars: '<path d="M0 0h16v16H0z" fill="#000"/><path d="M3.500 3v7M6.500 5v6M9.500 3v7M11.500 3v5" stroke="#00e000"/><path d="M0 13.500h16M14.500 0v16" stroke="#d00000" stroke-dasharray="2 1"/>',
  ohlc: '<path d="M5 2v11M11 1v11" stroke="#000080" stroke-width="2"/>' + N('M1 12.500h3M6 4.500h3M8 11.500h3M12 2.500h3') + '<path d="M1 15.500h14.500V1" stroke="#a0a0a0"/>',
  candles: '<path d="M4.500 2v12M10.500 1v12" stroke="#000080"/>' + box(3, 5, 2, 6, '#fff', '#000080') + box(9, 3, 3, 7, '#000080', '#000080') + '<path d="M1 15.500h14.500V3" stroke="#a0a0a0"/>',
  narrow: '<path d="M7.500 1v13" stroke="#0000ff"/>' + K('M0 7.500h5M3.500 5v5M2.500 6v3M16 7.500h-4M12.500 5v5M13.500 6v3') + '<path d="M9.500 4v8" stroke="#4040ff"/>',
  widen: '<path d="M.5 1v10M15.500 4v10" stroke="#0000ff"/>' + K('M2 7.500h5M3.500 6v3M4.500 5v5M9 7.500h5M12.500 6v3M11.500 5v5'),
  zoomIn: '<circle cx="6.500" cy="6.500" r="5.500" fill="#c0ffff" stroke="#000"/>' + K('M4 6.500h6M6.500 4v6') + '<path d="M11 11l5 5" stroke="#000080" stroke-width="3"/>',
  zoomOut: '<circle cx="6.500" cy="6.500" r="5.500" stroke="#a0a0a0"/><path d="M3 6.500h7" stroke="#a0a0a0"/><path d="M11 11l5 5" stroke="#a0a0a0" stroke-width="2"/>',
  pointer: '<path d="M4.500 1v12l3-3l2.500 5l2-1l-2.500-5h4z" fill="#fff" stroke="#000"/>',
  textTool: '<path d="M0 1h13v11H0z" fill="#000"/><path d="M0 0h13v2H0z" fill="#0000ff"/><path d="M12 0h2v2h-2z" fill="#f00"/><path d="M1 9l3-3l3 3l4-4" stroke="#00c000"/><path d="M8 7h9v9H8z" fill="#f0f0f0"/><path d="M8 8h9v3M13 8v8M9 8v3M11 15.500h4" stroke="#000" stroke-width="2"/>',
  tools: '<path d="M4 3l11 12" stroke="#000" stroke-width="2"/><path d="M13 4L2 15" stroke="#808000" stroke-width="2"/><path d="M1 4l4-4l3 3l-3 3z" fill="#000"/><path d="M11 4l4-3v4" stroke="#000"/>',
  addSheets: box(6, 1, 9, 9, '#ffffa0') + N('M8 3.500h6M8 5.500h6M8 7.500h6M0 3.500h6M3.500 0v7') + box(2, 8, 9, 6, '#d0d0ff', '#000080') + N('M5 15.500h9V11'),
  comment: '<path d="M1 1h13v11h-3v3l-3-3H1z" fill="#d0d0d0" stroke="#909090"/><path d="M3 3.500h9M3 5.500h9M3 7.500h9M3 9.500h9" stroke="#909090"/>',
  pitchfork: K('M0 15.500L8 7.500M4 6.500l6 5M10.500 11l5-5M4.500 7l4-6M7.500 8l6-7'),
  vlines: K('M.5 0v15M4.500 0v15M8.500 0v15M12.500 0v15M15.500 0v15'),
  hlines: K('M0 1.500h16M0 6.500h16M0 10.500h16M0 15.500h16'),
  calc: K('M0 .5h16M0 3.500h16M0 7.500h4M12 7.500h4') + box(4, 4, 8, 11, '#fff', '#000080') + N('M6 6.500h5M6 9v5M8.500 9v5M10.500 9v5'),
  arcs: K('M2 14L15 3M1 14c0-6 4-9 8-7M5 14c0-3 2-5 5-4M2 9c2-4 5-5 8-4M10 15c2-3 1-7-1-9M13 14c1-4 0-8-3-9'),
  fan: K('M0 15.500h16M0 15L6 9') + '<path d="M6 9l9-9M2 14l13-5M3 14l12-9" stroke="#000" stroke-dasharray="1 2"/>',
  levels: K('M0 14l3-2l3-8v6l2 4M8.500 1v13M8 1.500h8M8 4.500h7M8 7.500h6M8 10.500h6M8 13.500h5'),
  cycles: K('M0 2l7 6M7.500 1v14M11.500 1v14M15.500 1v14'),
  speed: K('M0 15.500h16M0 15L14 0M0 15l10-7') + '<path d="M3 14l11-3" stroke="#000" stroke-dasharray="2 1"/>',
  extend: K('M1 7.500h14M2.500 6v3M3.500 5v5M13.500 6v3M12.500 5v5'),
  parallel: K('M0 14L12 2M3 15L15 3M1 10L9 2'),
  ghost: K('M1.500 15V7c0-8 13-8 13 0v8M1.500 15l2-4l2 4l2-4l3 4l2-4l2 4M5.500 8v3M10.500 8v3'),
  pencil: '<path d="M8 10l4-9l3 2l-4 9l-3 2z" fill="#ffff40" stroke="#000"/><path d="M12 1l3 2" stroke="#c00000" stroke-width="2"/>' + K('M0 15.500h8'),
  arc: K('M12 1c0 6-2 11-8 12M2 13l3 0'),
  down: '<path d="M7 1h3v7h2l-3.500 6l-3.500-6h2z" fill="#ff0000"/>',
  up: '<path d="M6 14h3V7h2L7.500 1L4 7h2z" fill="#0000ff"/>',
  ellipse: '<circle cx="7" cy="8" r="7" stroke="#000"/>',
  rect: box(1, 1, 13, 13, 'none'),
}

// <tool-button icon> — one toolbar button; "pressed" draws it sunken
class ToolButton extends BaseElement {
  styles() {
    return `
      :host { display: block; }
      button { display: flex; width: 23px; height: 23px; padding: 3px 3px 4px 4px; }
      :host([pressed]) button { background: #f8f8f8; box-shadow: inset 1px 1px #808080, inset -1px -1px #fff; }
      svg { width: 16px; height: 16px; fill: none; overflow: visible; shape-rendering: crispEdges; }
      .abc { font: 12px/15px "Liberation Sans", Arial, sans-serif; }`
  }
  markup() {
    const icon = this.getAttribute('icon')
    return `<button aria-label="${icon}">${icon === 'abc' ? '<span class="abc">abc</span>'
      : `<svg viewBox="0 0 16 16" stroke-width="1">${ICONS[icon]}</svg>`}</button>`
  }
}
customElements.define('tool-button', ToolButton)

class ToolBar extends BaseElement {
  styles() {
    return `
      :host {
        display: flex; align-items: center; height: 30px; background: #f0f0f0; border-top: 1px solid #a0a0a0;
        padding-left: 24px;
      }
      .grip { width: 2px; height: 25px; margin: 0 5px 0 0; background: repeating-linear-gradient(#b4b4b4 0 2px, #f0f0f0 2px 4px); }
      .wide { margin-left: 17px; }
      .gap { margin-left: 26px; }
      i { width: 1px; height: 22px; margin: 0 4px 0 3px; background: #a0a0a0; }
      select { width: 136px; height: 23px; appearance: none; border: 1px solid #e3e3e3; border-radius: 0; background: #fff; }
      .combo { position: relative; display: flex; }
      .combo svg { position: absolute; right: 6px; top: 10px; width: 9px; height: 5px; }
      .next { width: 18px; height: 22px; display: grid; place-items: center; margin-right: 7px; }`
  }
  markup() {
    const t = (names) => names.split(' ').map((n) => n === '|' ? '<i></i>' : `<tool-button icon="${n}"></tool-button>`).join('')
    return `
      <span class="grip"></span>
      ${t('new open saveAll attach folder | window print | back backColor lock satellite cubes |')}
      <label class="combo"><select aria-label="Symbol"><option></option></select><svg><path d="M0 0h9L4.500 5z"/></svg></label>
      <button class="next" aria-label="Next"><svg width="5" height="10"><path d="M0 0l5 5l-5 5z"/></svg></button>
      ${t('lookup')}
      <span class="grip wide"></span>
      ${t('account accountOff sheet | study sort charts | hand handWindow | calendar clock bars ohlc candles | narrow widen | zoomIn zoomOut |')}
      <tool-button icon="pointer" pressed></tool-button>
      ${t('textTool | tools | addSheets | comment')}
      <span class="grip gap"></span>
      ${t('pitchfork vlines hlines calc arcs fan levels cycles speed extend parallel ghost pencil | arc down up ellipse rect abc')}`
  }
}
customElements.define('tool-bar', ToolBar)

// ---------- bottom strips ----------

class ScrollStrip extends BaseElement {
  styles() {
    return `
      :host { display: flex; align-items: center; height: 23px; background: #ececec; border-top: 1px solid #fafafa;
        border-bottom: 1px solid #fff; padding: 0 6px; }
      button { width: 12px; height: 18px; display: grid; place-items: center; }
      .track { flex: 1; display: flex; justify-content: flex-end; }
      .thumb { width: 19px; border: 1px solid #979797; border-radius: 2px; margin-right: 6px;
        background: linear-gradient(#f5f5f5, #d8d8d8); }`
  }
  markup() {
    return `
      <button aria-label="Scroll left"><svg width="5" height="8"><path d="M5 0v8L0 4z" fill="#333"/></svg></button>
      <div class="track"><button class="thumb" aria-label="Position"><svg width="9" height="8"><path d="M1.500 0v8M4.500 0v8M7.500 0v8" stroke="#666"/></svg></button></div>
      <button aria-label="Scroll right"><svg width="5" height="8"><path d="M0 0v8l5-4z" fill="#333"/></svg></button>`
  }
}
customElements.define('scroll-strip', ScrollStrip)

class SheetTabs extends BaseElement {
  styles() {
    return `
      :host { display: flex; height: 19px; background: #f0f0f0; font: 12px/17px "Liberation Sans", Arial, sans-serif; }
      .nav { width: 17px; height: 18px; border: 1px solid #a0a0a0; border-top-color: #fff; border-left-color: #fff; display: grid; place-items: center; }
      .tabs { display: flex; flex: 1; border-top: 1px solid #000; box-shadow: inset 0 -1px #a0a0a0; }
      .tab { height: 17px; padding: 0 7px; border-bottom: 1px solid #000; white-space: nowrap; }
      .active { background: #fff; font-weight: 700; border-color: #fff; padding: 0 5px; }
      .edge { width: 8px; height: 17px; fill: none; stroke: #000; }`
  }
  markup() {
    const names = ['STOX_TF60', 'STOX_TF120', 'STOX TF240', 'STOX _100', 'STOX_TF30', 'FIB_TF60', 'FIB_TF120',
      'FIB TF240', 'FIB_100', 'FIB_TF30', 'FIB Frame bassi', 'FIB Giornaliero', 'STOXX frame bassi',
      'STOXX giornaliero', 'No PREZZI', 'ANNUALE Indici']
    const active = 'FIB_TF30'
    const nav = { First: 'M4.500 0v8M11 0v8L7 4z', Previous: 'M9 0v8L5 4z', Next: 'M6 0v8l4-4z', Last: 'M5 0v8l4-4zM11.500 0v8' }
    const edge = (before, after) => {
      if (after === active) return '<svg class="edge"><path d="M0 0h8v17z" fill="#fff" stroke="none"/><path d="M0 0l8 17M0 17l3-7"/></svg>'
      if (before === active) return '<svg class="edge"><path d="M0 0h8L0 17z" fill="#fff" stroke="none"/><path d="M8 0L0 17M5 7l3 10"/></svg>'
      if (!before) return '<svg class="edge"><path d="M0 0l8 17"/></svg>'
      if (!after) return '<svg class="edge"><path d="M8 0L0 17"/></svg>'
      return '<svg class="edge"><path d="M0 0l8 17M0 17l4-8"/></svg>'
    }
    return `
      ${Object.entries(nav).map(([n, d]) => `<button class="nav" aria-label="${n}"><svg width="15" height="8"><path d="${d}" fill="#707070" stroke="#707070" stroke-width="1"/></svg></button>`).join('')}
      <div class="tabs">
        ${names.map((n, i) => `${edge(names[i - 1], n)}<button class="tab${n === active ? ' active' : ''}">${n}</button>`).join('')}${edge('last', null)}
      </div>`
  }
}
customElements.define('sheet-tabs', SheetTabs)

class StatusBar extends BaseElement {
  styles() {
    return `
      :host { display: flex; align-items: center; height: 20px; background: #f0eceb; border-top: 1px solid #a0a0a0;
        border-bottom: 2px solid #6f86a8; padding: 0 4px 0 2px; line-height: 17px; white-space: nowrap; }
      .help { flex: 1; }
      .cell { border-left: 1px solid #d4d4d4; padding: 0 14px 0 5px; }
      .green { color: #007f00; padding-right: 4px; }
      .light { padding: 0 4px; display: grid; }
      .time { padding-right: 0; }`
  }
  markup() {
    const cells = ['Acct:', 'Open Psns:', 'DT BP:', 'Purch Pwr:', 'Closed P/L:', 'RT TE:', 'Open P/L:']
    return `
      <span class="help">For Help, press F1</span>
      ${cells.map((c) => `<span class="cell">${c}</span>`).join('')}
      <span class="cell green">ORDER BAR</span>
      <span class="cell green">MACROS</span>
      <span class="cell light"><svg width="12" height="12"><circle cx="6" cy="6" r="5" fill="#d00000" stroke="#400000"/><circle cx="4" cy="4" r="1.500" fill="#ff9090"/></svg></span>
      <span class="cell time">19/07/2022 16:32</span>`
  }
}
customElements.define('status-bar', StatusBar)

class TradeStation extends BaseElement {
  styles() {
    return ':host { display: flex; flex-direction: column; min-height: 100vh; } chart-window { flex: 1; }'
  }
  markup() {
    return `
      <title-bar></title-bar>
      <menu-bar></menu-bar>
      <tool-bar></tool-bar>
      <chart-window></chart-window>
      <scroll-strip></scroll-strip>
      <sheet-tabs></sheet-tabs>
      <status-bar></status-bar>`
  }
}
customElements.define('trade-station', TradeStation)
</script>
</body>
</html>
